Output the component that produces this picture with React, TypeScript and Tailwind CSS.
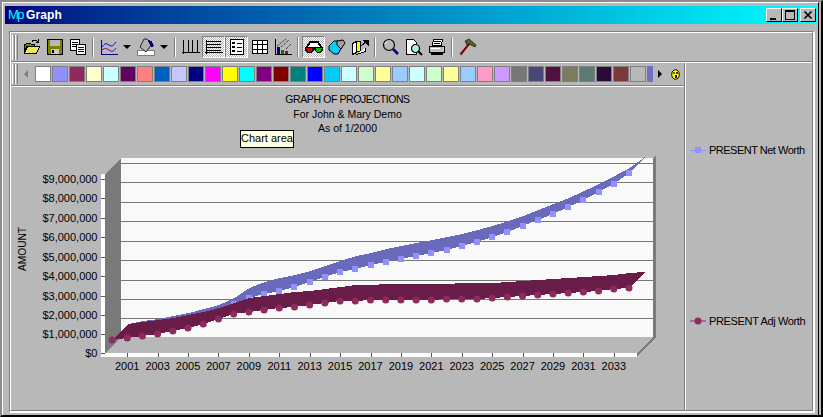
import React from "react";

const netY = [340,337,335,332,329,325,321,314,304,298,294,291,287,282,277,272,269,265,262,259,256,253,250,246,242,237,232,226,220,214,207,200,192,184,173];
const adjY = [340,338,336,334,331,328,324,319,314,312,310,308,307,305,303,301,301,300,300,300,300,300,299,299,299,298,297,296,295,294,293,292,291,289,288];
const xOf = (i: number) => 112 + i * 15.206;

function ribbon(ys: number[]) {
  const front = ys.map((y, i) => `${xOf(i)},${y}`);
  const back = ys.map((y, i) => `${xOf(i) + 16},${y - 16}`).reverse();
  return [...front, ...back].join(" ");
}

const swatches = ["#ffffff","#9090ff","#8f2a5f","#ffffcc","#ccffff","#600060","#ff8080","#0060c0","#c4c8ff","#000080","#ff00ff","#ffff00","#00ffff","#800080","#800000","#008080","#0000ff","#00ccff","#ccffff","#ccffcc","#ffff99","#99ccff","#ccffff","#ccffcc","#ffff99","#99ccff","#ff99cc","#cc99ff","#777777","#484878","#501040","#7b7b5e","#5f7878","#2b0a3a","#7b3a3a","#b8b8b8"];

const Ic = ({ children, w = 18, h = 18 }: { children: React.ReactNode; w?: number; h?: number }) => (
  <svg width={w} height={h} viewBox={`0 0 ${w} ${h}`} shapeRendering="crispEdges">{children}</svg>
);

const icons: Record<string, React.ReactNode> = {
  folder: (
    <Ic>
      <path d="M1.5 15.5V6.5h1l1-1h4l1 1h3v2h-8l-2 7z" fill="#808000" stroke="#000" />
      <path d="M1.5 15.5l3-7h12l-3 7z" fill="#f4e45c" stroke="#000" />
      <path d="M9 3.5c2-2 4-2 6 0M15.5 1v4M13 4.5h3" fill="none" stroke="#000" />
    </Ic>
  ),
  save: (
    <Ic>
      <rect x="1.5" y="1.5" width="15" height="15" fill="#808000" stroke="#000" />
      <rect x="4" y="2" width="10" height="6" fill="#b8b8b8" />
      <rect x="5" y="11" width="8" height="5" fill="#c8c8c8" />
      <rect x="6" y="12" width="2" height="3" fill="#000" />
    </Ic>
  ),
  copy: (
    <Ic>
      <rect x="1.5" y="1.5" width="9" height="11" fill="#fff" stroke="#000" />
      <path d="M3 4h6M3 6h6M3 8h4" stroke="#000" />
      <rect x="7.5" y="6.5" width="9" height="10" fill="#fff" stroke="#000" />
      <path d="M9 9h6M9 11h6M9 13h6" stroke="#000080" />
    </Ic>
  ),
  line: (
    <Ic>
      <path d="M1.5 2v14h16" fill="none" stroke="#000080" />
      <path d="M2 9c3-4 4-4 7-2s4 1 7-3" fill="none" stroke="#0000ff" shapeRendering="auto" />
      <path d="M2 12c3-2 4-2 7 0s4 2 7-2" fill="none" stroke="#800080" shapeRendering="auto" />
    </Ic>
  ),
  bucket: (
    <Ic w={20}>
      <rect x="1.5" y="12.5" width="17" height="5" fill="#fff" stroke="#808080" />
      <path d="M8 1h3l5 5-6 8-6-5z" fill="#b0b0b0" stroke="#000" strokeWidth="0.8" shapeRendering="auto" />
      <path d="M12 2c3 0 5 2 6 6l-3 1-2-4z" fill="#000080" />
    </Ic>
  ),
  vert: (
    <Ic>
      <path d="M1.5 2v14M0 14.5h18M6 2v13M10.5 2v13M15 2v13" stroke="#000" fill="none" />
    </Ic>
  ),
  horz: (
    <Ic>
      <path d="M1.5 2v14M0 14.5h18" stroke="#000" fill="none" />
      <path d="M2 3.5h14M2 6.5h14M2 9.5h14M2 12h14" stroke="#000" fill="none" />
    </Ic>
  ),
  legend: (
    <Ic>
      <rect x="2.5" y="1.5" width="13" height="15" fill="#fff" stroke="#000" />
      <path d="M4 4h3v2H4zM4 8h3v2H4zM4 12h3v2H4z" fill="#000" />
      <path d="M9 5h5M9 9h5M9 13h5" stroke="#000" />
    </Ic>
  ),
  grid: (
    <Ic>
      <rect x="1.5" y="2.5" width="15" height="13" fill="#fff" stroke="#000" />
      <path d="M1 6.5h16M1 11h16M6.5 3v12M11.5 3v12" stroke="#000" />
    </Ic>
  ),
  bars: (
    <Ic>
      <path d="M1.5 1v16M1 16.5h17" stroke="#000" />
      <rect x="3" y="9" width="3" height="7" fill="#000080" />
      <rect x="7" y="12" width="3" height="4" fill="#008000" />
      <rect x="11" y="13" width="3" height="3" fill="#c00000" />
      <path d="M3 8l9-7M7 9l8-7M12 11l5-5" stroke="#000" strokeDasharray="1 1" shapeRendering="auto" fill="none" />
    </Ic>
  ),
  glasses: (
    <Ic w={20}>
      <path d="M3 9l3-5h8l3 5" fill="#fff" stroke="#000" strokeWidth="2" />
      <path d="M1 9h18v3l-2 3h-4l-3-3-3 3H3l-2-3z" fill="#000" />
      <path d="M2 10h6v2l-1 2H4z" fill="#e00000" />
      <path d="M12 10h6l-2 4h-3l-1-2z" fill="#00c000" />
    </Ic>
  ),
  cube: (
    <Ic>
      <path d="M1 8l5-5h4l4 6-4 7H6L1 12z" fill="#00ccff" stroke="#000" shapeRendering="auto" />
      <path d="M9 3l6-1 2 3-4 6-4-4z" fill="#a0a0a0" stroke="#000" shapeRendering="auto" />
    </Ic>
  ),
  export: (
    <Ic>
      <path d="M1.5 5.5l4-2v11l-4 2z" fill="#fff" stroke="#000" />
      <path d="M5.5 3.5h4v10h-4z" fill="#ffff00" stroke="#000" />
      <path d="M5.5 16.5l9-3v-4" fill="#fff" stroke="#000" />
      <path d="M10 8l6-5M12 2h5v5z" stroke="#000" fill="#000" />
    </Ic>
  ),
  zoom: (
    <Ic>
      <circle cx="7" cy="7" r="5.5" fill="#b8b8b8" stroke="#000" strokeWidth="1.2" shapeRendering="auto" />
      <path d="M5 3c-1 1-2 2-2 3" stroke="#fff" fill="none" shapeRendering="auto" />
      <path d="M11 11l5 5" stroke="#000080" strokeWidth="2.6" shapeRendering="auto" />
    </Ic>
  ),
  preview: (
    <Ic>
      <path d="M1.5 1.5h7l3 3v12h-10z" fill="#fff" stroke="#000" />
      <circle cx="10.5" cy="10.5" r="4" fill="#aeeef0" stroke="#000" strokeWidth="1.2" shapeRendering="auto" />
      <path d="M13 13l4 4" stroke="#000" strokeWidth="2" shapeRendering="auto" />
    </Ic>
  ),
  print: (
    <Ic>
      <path d="M5.5 1.5h9l-1 6h-9z" fill="#fff" stroke="#000" />
      <path d="M6 3.5h7M6 5.5h6" stroke="#000" />
      <path d="M1.5 8.5h15v6h-15z" fill="#c0c0c0" stroke="#000" />
      <path d="M3 15.5h12" stroke="#000" strokeWidth="2" />
      <path d="M3 10.5h9" stroke="#fff" />
    </Ic>
  ),
  hammer: (
    <Ic>
      <path d="M1.5 16.5L10 6" stroke="#800000" strokeWidth="2" shapeRendering="auto" />
      <path d="M6 3l4-2 7 6-1 2-6-3-2 1z" fill="#5c5c20" stroke="#000" strokeWidth="0.6" shapeRendering="auto" />
    </Ic>
  ),
};

function Btn({ name, pressed }: { name: string; pressed?: boolean }) {
  return (
    <div
      className={
        pressed
          ? "w-[23px] h-[22px] flex items-center justify-center border border-t-[#808080] border-l-[#808080] border-r-white border-b-white bg-[repeating-conic-gradient(#ffffff_0_25%,#b8b8b8_0_50%)] bg-[length:2px_2px]"
          : "w-[23px] h-[22px] flex items-center justify-center"
      }
    >
      {icons[name]}
    </div>
  );
}

const Sep = () => (
  <div className="w-[8px] h-[20px] flex justify-center">
    <div className="w-[2px] h-full border-l border-l-[#808080] border-r border-r-white" />
  </div>
);

const Caret = () => (
  <div className="w-[14px] flex justify-center items-center">
    <div className="w-0 h-0 border-l-[4px] border-r-[4px] border-t-[4px] border-l-transparent border-r-transparent border-t-black" />
  </div>
);

const Grip = ({ h }: { h: string }) => (
  <div className={`flex ${h} ml-[1px]`}>
    <div className="w-[3px] border-l border-l-white border-r border-r-[#808080]" />
    <div className="w-[3px] border-l border-l-white border-r border-r-[#808080]" />
  </div>
);

const WinBtn = ({ children, ml }: { children: React.ReactNode; ml?: string }) => (
  <div className={`w-[16px] h-[14px] bg-[#b8b8b8] border border-t-white border-l-white border-r-black border-b-black flex items-center justify-center ${ml ?? ""}`}>
    {children}
  </div>
);

export default function App() {
  const yTicks = [179, 198, 218, 237, 257, 276, 296, 315, 334, 353];
  const yLabels = ["$9,000,000","$8,000,000","$7,000,000","$6,000,000","$5,000,000","$4,000,000","$3,000,000","$2,000,000","$1,000,000","$0"];
  const grid = [163, 182, 202, 221, 241, 260, 280, 299, 318];
  const years = Array.from({ length: 17 }, (_, i) => ({ y: 2001 + i * 2, x: xOf(1 + i * 2) }));
  return (
    <div className="w-[823px] h-[417px] overflow-hidden bg-[#b8b8b8] border-2 border-t-[#8c8c8c] border-l-[#8c8c8c] border-r-black border-b-black font-['Liberation_Sans',Arial,sans-serif] text-black">
      <div className="h-[413px] border-t border-l border-t-white border-l-white mr-[2px] border-r border-r-black pl-[2px] pt-[3px]">
        {/* title bar */}
        <div className="w-[812px] h-[18px] bg-gradient-to-r from-[#000080] to-[#00ffff] flex items-center pl-[3px] pr-[1px]">
          <span className="w-[18px] shrink-0 text-[13px] leading-[18px] text-[#00ffff] tracking-[-1.5px]">Mp</span>
          <span className="text-[12px] leading-[18px] font-bold text-white tracking-[0.1px]">Graph</span>
          <div className="flex ml-auto">
            <WinBtn>
              <div className="w-[6px] h-[2px] bg-black mt-[7px] mr-[2px]" />
            </WinBtn>
            <WinBtn>
              <div className="w-[10px] h-[10px] border border-t-2 border-black" />
            </WinBtn>
            <WinBtn ml="ml-[2px]">
              <svg width="10" height="10" viewBox="0 0 10 10">
                <path d="M1.5 1.5l7 7M8.5 1.5l-7 7" stroke="#000" strokeWidth="1.6" />
              </svg>
            </WinBtn>
          </div>
        </div>
        {/* sunken frame */}
        <div className="ml-[4px] mt-[7px] w-[806px] h-[382px] border border-t-[#808080] border-l-[#808080] border-r-2 border-b-2 border-r-white border-b-white">
          <div className="w-full h-full border border-t-white border-l-white border-r-[#808080] border-b-[#808080] flex flex-col">
            {/* main toolbar */}
            <div className="h-[29px] shrink-0 border-b border-b-[#808080] flex items-center">
              <Grip h="h-[25px]" />
              <div className="flex items-center ml-[2px]">
                <Btn name="folder" />
                <Btn name="save" />
                <Btn name="copy" />
                <Sep />
                <Btn name="line" />
                <Caret />
                <Btn name="bucket" />
                <Caret />
                <Sep />
                <Btn name="vert" />
                <Btn name="horz" pressed />
                <Btn name="legend" pressed />
                <Btn name="grid" />
                <Btn name="bars" />
                <Sep />
                <Btn name="glasses" pressed />
                <Btn name="cube" />
                <Btn name="export" />
                <Sep />
                <Btn name="zoom" />
                <Btn name="preview" />
                <Btn name="print" />
                <Sep />
                <Btn name="hammer" />
              </div>
            </div>
            <div className="flex-1 flex border-t border-t-white min-h-0">
              <div className="w-[674px] shrink-0 flex flex-col border-r border-r-[#808080]">
                {/* colour bar */}
                <div className="h-[23px] shrink-0 border-b border-b-[#808080] flex items-center">
                  <Grip h="h-[20px]" />
                  <div className="w-0 h-0 ml-[6px] border-y-[4px] border-r-[4px] border-y-transparent border-r-[#808080]" />
                  <div className="flex gap-[1px] ml-[7px] overflow-hidden">
                    {swatches.map((c, i) => (
                      <div key={i} className="w-[16px] h-[16px] shrink-0 border border-[#808080]" style={{ backgroundColor: c }} />
                    ))}
                    <div className="w-[6px] h-[16px] shrink-0 bg-[#7070c0]" />
                  </div>
                  <div className="w-0 h-0 ml-[5px] border-y-[4px] border-l-[4px] border-y-transparent border-l-black" />
                  <svg className="ml-[9px]" width="9" height="11" viewBox="0 0 9 11">
                    <ellipse cx="4.5" cy="5.5" rx="3.8" ry="4.8" fill="#ffff00" stroke="#000" />
                    <rect x="2" y="3" width="2" height="2" fill="#00a000" />
                    <rect x="5" y="3" width="2" height="2" fill="#e00000" />
                    <rect x="4" y="6" width="2" height="3" fill="#0000d0" />
                  </svg>
                </div>
                {/* chart pane */}
                <div className="relative flex-1 border-t border-t-white flex flex-col min-h-0">
                  <div className="h-[63px] shrink-0 pt-[5px] text-center text-[10.5px] leading-[14.5px]">
                    <div className="tracking-[-0.4px]">GRAPH OF PROJECTIONS</div>
                    <div>For John &amp; Mary Demo</div>
                    <div>As of 1/2000</div>
                  </div>
                  <svg width="673" height="260" viewBox="11 150 673 260" className="block shrink-0">
                    <g shapeRendering="crispEdges">
                      <rect x="121" y="158" width="532" height="179" fill="#f9f9f9" />
                      {grid.map((y) => (
                        <rect key={y} x="121" y={y} width="532" height="1" fill="#777777" />
                      ))}
                      <polygon points="653,158 656,156 656,337 637,357 637,353 653,337" fill="#7a7a7a" />
                      <polygon points="105,174 121,158 121,337 105,353" fill="#7a7a7a" />
                      <rect x="101" y="174" width="4" height="183" fill="#ffffff" />
                      <rect x="101" y="353" width="536" height="4" fill="#ffffff" />
                      {yTicks.map((y) => (
                        <rect key={y} x="101" y={y} width="4" height="1" fill="#555555" />
                      ))}
                      {years.map((t) => (
                        <rect key={t.y} x={Math.round(t.x)} y="353" width="1" height="4" fill="#555555" />
                      ))}
                      <polygon points={ribbon(netY)} fill="#6a6abd" />
                      {netY.map((y, i) => (
                        <rect key={i} x={Math.round(xOf(i)) - 3} y={y - 3} width="6" height="6" fill="#9090ff" />
                      ))}
                      <polygon points={ribbon(adjY)} fill="#691c47" />
                    </g>
                    {adjY.map((y, i) => (
                      <circle key={i} cx={xOf(i)} cy={y} r="3.5" fill="#8f2a5f" />
                    ))}
                    <g fontSize="11" fill="#000">
                      {yLabels.map((l, i) => (
                        <text key={l} x="97.5" y={yTicks[i] + 4} textAnchor="end">{l}</text>
                      ))}
                      {years.map((t) => (
                        <text key={t.y} x={t.x} y="370" textAnchor="middle">{t.y}</text>
                      ))}
                    </g>
                    <text x="26" y="249" fontSize="10.2" textAnchor="middle" transform="rotate(-90 26 249)">AMOUNT</text>
                  </svg>
                  <div className="absolute left-[229px] top-[43px] w-[54px] h-[18px] bg-[#ffffe1] border border-black text-[11px] leading-[15px] text-center whitespace-nowrap">
                    Chart area
                  </div>
                </div>
              </div>
              {/* legend */}
              <div className="flex-1 border-l border-l-white pt-[80px] flex flex-col gap-[157px] text-[11px] leading-[14px] whitespace-nowrap">
                <div className="flex items-center h-[14px] pl-[4px]">
                  <svg className="shrink-0" width="16" height="8" viewBox="0 0 16 8" shapeRendering="crispEdges">
                    <rect x="0" y="4" width="16" height="1" fill="#9090ff" />
                    <rect x="5" y="1" width="6" height="6" fill="#9090ff" />
                  </svg>
                  <span className="ml-[3px] tracking-[-0.5px]">PRESENT Net Worth</span>
                </div>
                <div className="flex items-center h-[14px] pl-[4px]">
                  <svg className="shrink-0" width="16" height="8" viewBox="0 0 16 8">
                    <rect x="0" y="3.5" width="16" height="1" fill="#8f2a5f" />
                    <circle cx="8" cy="4" r="3.5" fill="#8f2a5f" />
                  </svg>
                  <span className="ml-[3px] tracking-[-0.35px]">PRESENT Adj Worth</span>
                </div>
              </div>
            </div>
          </div>
        </div>
      </div>
    </div>
  );
}
